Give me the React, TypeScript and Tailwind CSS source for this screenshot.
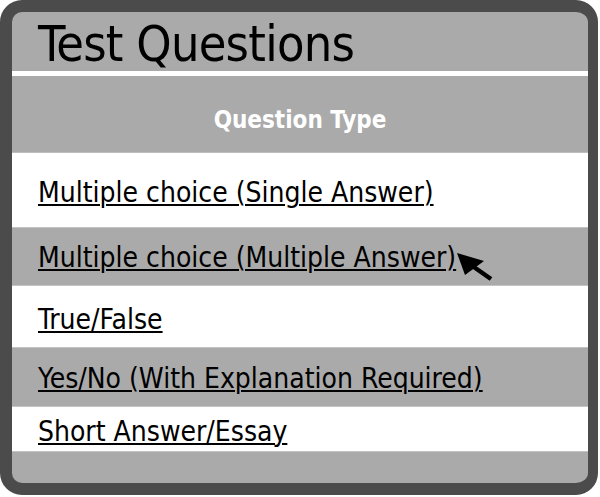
const rows = [
  { label: 'Multiple choice (Single Answer)', bg: 'bg-white', h: 'h-[75px]', pt: 'pt-[26px]' },
  { label: 'Multiple choice (Multiple Answer)', bg: 'bg-[#aaaaaa]', h: 'h-[58px]', pt: 'pt-[16px]', cursor: true },
  { label: 'True/False', bg: 'bg-white', h: 'h-[62px]', pt: 'pt-[20px]' },
  { label: 'Yes/No (With Explanation Required)', bg: 'bg-[#aaaaaa]', h: 'h-[59px]', pt: 'pt-[17px]' },
  { label: 'Short Answer/Essay', bg: 'bg-white', h: 'h-[45px]', pt: 'pt-[11px]' },
]

function Cursor() {
  return (
    <svg
      className="absolute left-[444px] top-[24px]"
      width="38"
      height="30"
      viewBox="0 0 38 30"
    >
      <polygon points="1,1 28,9 9,23" fill="#000" />
      <line x1="15" y1="13" x2="35" y2="27" stroke="#000" strokeWidth="4.5" />
    </svg>
  )
}

export default function App() {
  return (
    <div
      className="w-[600px] h-[497px] bg-white"
      style={{ fontFamily: '"DejaVu Sans Condensed", "DejaVu Sans", sans-serif' }}
    >
      <div className="w-[598px] h-[495px] border-[12px] border-r-[10px] border-[#4b4b4b] rounded-[22px] bg-[#aaaaaa] overflow-hidden flex flex-col">
        <div className="h-[59px] pl-[26px] pt-[7px] text-[50px] leading-none text-black tracking-[-0.75px] shrink-0">
          Test Questions
        </div>
        <div className="h-[5px] bg-white shrink-0" />
        <div className="h-[77px] flex items-center justify-center text-white font-bold text-[24px] border-b border-[#bdbdbd] shrink-0 pt-[12px]">
          Question Type
        </div>
        {rows.map((r) => (
          <div
            key={r.label}
            className={`relative ${r.bg} ${r.h} ${r.pt} pl-[26px] border-b border-[#c4c4c4] shrink-0`}
          >
            <a className="text-[28px] leading-[28px] text-black underline decoration-[1.5px] underline-offset-[2px] cursor-pointer">
              {r.label}
            </a>
            {r.cursor && <Cursor />}
          </div>
        ))}
        <div className="flex-1" />
      </div>
    </div>
  )
}
